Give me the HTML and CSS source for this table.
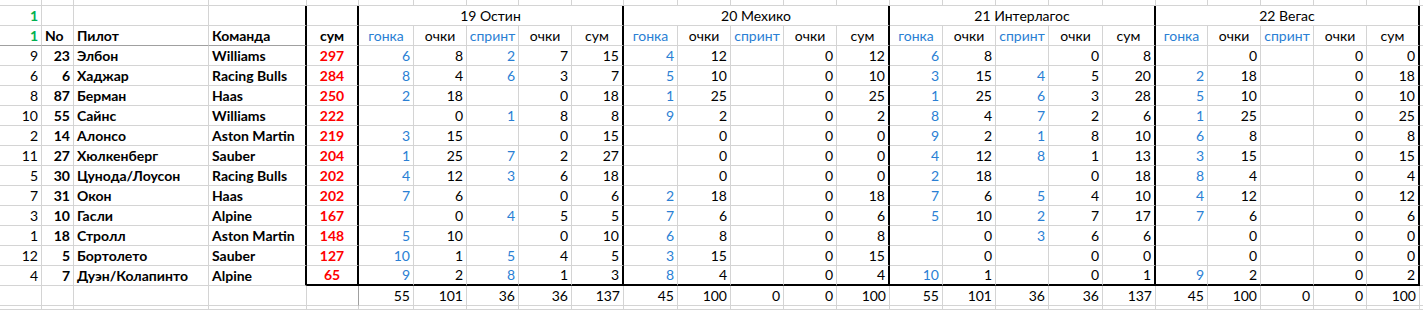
FILE: index.html
```html
<!DOCTYPE html>
<html lang="ru">
  <head>
    <meta charset="utf-8" />
    <meta name="viewport" content="width=device-width" />
    <title>Таблица пилотов</title>
    <link rel="stylesheet" href="styles.css">
  </head>
  <body>
    <div class="sheet">
      <div class="row strip">
        <div></div><div></div><div></div><div></div><div></div>
        <div></div><div></div><div></div><div></div><div></div>
        <div></div><div></div><div></div><div></div><div></div>
        <div></div><div></div><div></div><div></div><div></div>
        <div></div><div></div><div></div><div></div><div></div>
        <div></div>
      </div>

      <div class="row titles">
        <div class="green">1</div><div></div><div></div><div class="edge"></div><div class="edge"></div>
        <div class="race edge">19 Остин</div>
        <div class="race edge">20 Мехико</div>
        <div class="race edge">21 Интерлагос</div>
        <div class="race edge">22 Вегас</div>
        <div></div>
      </div>

      <div class="row frame head">
        <div class="green">1</div><div>No</div><div>Пилот</div><div>Команда</div><div>сум</div>
        <div>гонка</div><div>очки</div><div>спринт</div><div>очки</div><div>сум</div>
        <div>гонка</div><div>очки</div><div>спринт</div><div>очки</div><div>сум</div>
        <div>гонка</div><div>очки</div><div>спринт</div><div>очки</div><div>сум</div>
        <div>гонка</div><div>очки</div><div>спринт</div><div>очки</div><div>сум</div>
        <div></div>
      </div>

      <div class="row frame data">
        <div>9</div><div>23</div><div>Элбон</div><div>Williams</div><div>297</div>
        <div>6</div><div>8</div><div>2</div><div>7</div><div>15</div>
        <div>4</div><div>12</div><div></div><div>0</div><div>12</div>
        <div>6</div><div>8</div><div></div><div>0</div><div>8</div>
        <div></div><div>0</div><div></div><div>0</div><div>0</div>
        <div></div>
      </div>
      <div class="row frame data">
        <div>6</div><div>6</div><div>Хаджар</div><div>Racing Bulls</div><div>284</div>
        <div>8</div><div>4</div><div>6</div><div>3</div><div>7</div>
        <div>5</div><div>10</div><div></div><div>0</div><div>10</div>
        <div>3</div><div>15</div><div>4</div><div>5</div><div>20</div>
        <div>2</div><div>18</div><div></div><div>0</div><div>18</div>
        <div></div>
      </div>
      <div class="row frame data">
        <div>8</div><div>87</div><div>Берман</div><div>Haas</div><div>250</div>
        <div>2</div><div>18</div><div></div><div>0</div><div>18</div>
        <div>1</div><div>25</div><div></div><div>0</div><div>25</div>
        <div>1</div><div>25</div><div>6</div><div>3</div><div>28</div>
        <div>5</div><div>10</div><div></div><div>0</div><div>10</div>
        <div></div>
      </div>
      <div class="row frame data">
        <div>10</div><div>55</div><div>Сайнс</div><div>Williams</div><div>222</div>
        <div></div><div>0</div><div>1</div><div>8</div><div>8</div>
        <div>9</div><div>2</div><div></div><div>0</div><div>2</div>
        <div>8</div><div>4</div><div>7</div><div>2</div><div>6</div>
        <div>1</div><div>25</div><div></div><div>0</div><div>25</div>
        <div></div>
      </div>
      <div class="row frame data">
        <div>2</div><div>14</div><div>Алонсо</div><div>Aston Martin</div><div>219</div>
        <div>3</div><div>15</div><div></div><div>0</div><div>15</div>
        <div></div><div>0</div><div></div><div>0</div><div>0</div>
        <div>9</div><div>2</div><div>1</div><div>8</div><div>10</div>
        <div>6</div><div>8</div><div></div><div>0</div><div>8</div>
        <div></div>
      </div>
      <div class="row frame data">
        <div>11</div><div>27</div><div>Хюлкенберг</div><div>Sauber</div><div>204</div>
        <div>1</div><div>25</div><div>7</div><div>2</div><div>27</div>
        <div></div><div>0</div><div></div><div>0</div><div>0</div>
        <div>4</div><div>12</div><div>8</div><div>1</div><div>13</div>
        <div>3</div><div>15</div><div></div><div>0</div><div>15</div>
        <div></div>
      </div>
      <div class="row frame data">
        <div>5</div><div>30</div><div>Цунода/Лоусон</div><div>Racing Bulls</div><div>202</div>
        <div>4</div><div>12</div><div>3</div><div>6</div><div>18</div>
        <div></div><div>0</div><div></div><div>0</div><div>0</div>
        <div>2</div><div>18</div><div></div><div>0</div><div>18</div>
        <div>8</div><div>4</div><div></div><div>0</div><div>4</div>
        <div></div>
      </div>
      <div class="row frame data">
        <div>7</div><div>31</div><div>Окон</div><div>Haas</div><div>202</div>
        <div>7</div><div>6</div><div></div><div>0</div><div>6</div>
        <div>2</div><div>18</div><div></div><div>0</div><div>18</div>
        <div>7</div><div>6</div><div>5</div><div>4</div><div>10</div>
        <div>4</div><div>12</div><div></div><div>0</div><div>12</div>
        <div></div>
      </div>
      <div class="row frame data">
        <div>3</div><div>10</div><div>Гасли</div><div>Alpine</div><div>167</div>
        <div></div><div>0</div><div>4</div><div>5</div><div>5</div>
        <div>7</div><div>6</div><div></div><div>0</div><div>6</div>
        <div>5</div><div>10</div><div>2</div><div>7</div><div>17</div>
        <div>7</div><div>6</div><div></div><div>0</div><div>6</div>
        <div></div>
      </div>
      <div class="row frame data">
        <div>1</div><div>18</div><div>Стролл</div><div>Aston Martin</div><div>148</div>
        <div>5</div><div>10</div><div></div><div>0</div><div>10</div>
        <div>6</div><div>8</div><div></div><div>0</div><div>8</div>
        <div></div><div>0</div><div>3</div><div>6</div><div>6</div>
        <div></div><div>0</div><div></div><div>0</div><div>0</div>
        <div></div>
      </div>
      <div class="row frame data">
        <div>12</div><div>5</div><div>Бортолето</div><div>Sauber</div><div>127</div>
        <div>10</div><div>1</div><div>5</div><div>4</div><div>5</div>
        <div>3</div><div>15</div><div></div><div>0</div><div>15</div>
        <div></div><div>0</div><div></div><div>0</div><div>0</div>
        <div></div><div>0</div><div></div><div>0</div><div>0</div>
        <div></div>
      </div>
      <div class="row frame data last">
        <div>4</div><div>7</div><div>Дуэн/Колапинто</div><div>Alpine</div><div>65</div>
        <div>9</div><div>2</div><div>8</div><div>1</div><div>3</div>
        <div>8</div><div>4</div><div></div><div>0</div><div>4</div>
        <div>10</div><div>1</div><div></div><div>0</div><div>1</div>
        <div>9</div><div>2</div><div></div><div>0</div><div>2</div>
        <div></div>
      </div>

      <div class="row totals">
        <div></div><div></div><div></div><div></div><div></div>
        <div>55</div><div>101</div><div>36</div><div>36</div><div>137</div>
        <div>45</div><div>100</div><div>0</div><div>0</div><div>100</div>
        <div>55</div><div>101</div><div>36</div><div>36</div><div>137</div>
        <div>45</div><div>100</div><div>0</div><div>0</div><div>100</div>
        <div></div>
      </div>

      <div class="row tail">
        <div></div><div></div><div></div><div></div><div></div>
        <div></div><div></div><div></div><div></div><div></div>
        <div></div><div></div><div></div><div></div><div></div>
        <div></div><div></div><div></div><div></div><div></div>
        <div></div><div></div><div></div><div></div><div></div>
        <div></div>
      </div>
    </div>
  </body>
</html>
```

FILE: styles.css
```css
html,
body {
  margin: 0;
  background: #fff;
  color: #000;
  font: 400 14px/16px Lato, "Open Sans", sans-serif;
}
.sheet {
  display: flex;
  flex-direction: column;
  height: 310px;
  overflow: hidden;
}
.row {
  display: grid;
  grid-template-columns:
    42px 32px 135px 98px 52px
    55px 53px 52px 53px 52px
    54px 53px 53px 53px 53px
    53px 53px 53px 54px 53px
    52px 53px 53px 53px 53px
    1fr;
  height: 20px;
  flex: none;
}
.row > div {
  box-sizing: border-box;
  display: flex;
  align-items: flex-end;
  justify-content: flex-end;
  padding: 0 3px 1px;
  border-right: 1px solid #d4d4d4;
  border-bottom: 1px solid #d4d4d4;
  white-space: nowrap;
  overflow: hidden;
}

/* column letter bar, cut off at the top edge */
.strip {
  height: 6px;
}

.green {
  color: #00b050;
  font-weight: 700;
}
.titles .race {
  grid-column: span 5;
  justify-content: center;
}
.titles .edge,
.frame > :nth-child(4),
.frame > :nth-child(5n+5) {
  border-right: 2px solid #000;
}

/* header row */
.head > :nth-child(2),
.head > :nth-child(3),
.head > :nth-child(4) {
  justify-content: flex-start;
  font-weight: 700;
}
.head > :nth-child(5) {
  font-weight: 700;
}
.head > :nth-child(n+5) {
  justify-content: center;
}
.head > :nth-child(-n+4) {
  border-bottom-color: #a0a0a0;
}
.head > :nth-child(5n+6),
.head > :nth-child(5n+8),
.data > :nth-child(5n+6),
.data > :nth-child(5n+8) {
  color: #2a7fd4;
}

/* drivers */
.data > :nth-child(2) {
  font-weight: 700;
}
.data > :nth-child(3),
.data > :nth-child(4) {
  justify-content: flex-start;
  font-weight: 700;
}
.data > :nth-child(5) {
  justify-content: center;
  color: #ff0000;
  font-weight: 700;
}
.last > :nth-child(n+5):nth-child(-n+25) {
  border-bottom: 2px solid #000;
}

.totals > :nth-child(5) {
  border-right-color: #a0a0a0;
}
.tail {
  height: auto;
  flex: 1;
}
```
